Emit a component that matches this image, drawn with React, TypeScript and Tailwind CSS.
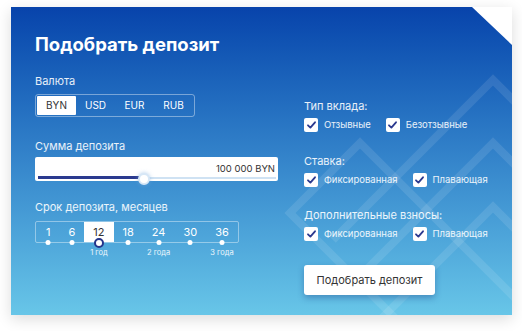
import type { ReactNode } from 'react';

const CURRENCIES = ['BYN', 'USD', 'EUR', 'RUB'];

const TERMS = [
  { value: '1' },
  { value: '6' },
  { value: '12', note: '1 год' },
  { value: '18' },
  { value: '24', note: '2 года' },
  { value: '30' },
  { value: '36', note: '3 года' },
];

function Check({ label }: { label: string }) {
  return (
    <label className="flex items-center gap-[6px]">
      <span className="w-[14px] h-[14px] rounded-[2px] bg-white flex items-center justify-center">
        <svg width="9" height="8" viewBox="0 0 9 8">
          <path d="M1 4.3 L3.4 6.6 L8 1.3" fill="none" stroke="#2c3a8f" strokeWidth="1.8" strokeLinecap="round" strokeLinejoin="round" />
        </svg>
      </span>
      <span className="text-[9.5px] leading-[14px] text-white/90">{label}</span>
    </label>
  );
}

function Group({ title, children, className }: { title: string; children: ReactNode; className?: string }) {
  return (
    <div className={className}>
      <div className="text-[11px] leading-[16px] text-white/90">{title}</div>
      <div className="mt-[4px] flex gap-[15px]">{children}</div>
    </div>
  );
}

function Pattern() {
  // decorative chevrons behind the form
  return (
    <svg className="absolute inset-0 pointer-events-none" width="501" height="308" viewBox="0 0 501 308">
      <g fill="none" stroke="white" strokeOpacity="0.1" strokeWidth="8" strokeLinejoin="miter">
        <polyline points="322,233 482,73 560,151" />
        <polyline points="389,316 279,206 349,136 569,356" />
        <polyline points="332,286 482,136 560,214" />
        <polyline points="352,330 482,200 560,278" />
      </g>
    </svg>
  );
}

function App() {
  return (
    <div className="min-h-screen bg-white pl-[11px] pt-[7px] font-['Inter',sans-serif]">
      <div className="w-[501px] h-[308px] bg-white shadow-[0_4px_14px_rgba(0,0,0,0.14)]">
        <div className="relative w-full h-full bg-gradient-to-b from-[#0843ab] via-[#3585cb] to-[#68c6e8] [clip-path:polygon(0_0,461px_0,100%_38px,100%_100%,0_100%)]">
          <Pattern />
          <div className="relative flex pt-[25px] pl-[24px]">
            {/* Left column */}
            <div className="w-[243px] flex flex-col">
              <h1 className="text-[18.5px] leading-[24px] font-bold text-white">Подобрать депозит</h1>

              <div className="mt-[17px] text-[11px] leading-[16px] text-white/90">Валюта</div>
              <div className="mt-[5px] flex w-fit p-px border border-white/40 rounded-[3px]">
                {CURRENCIES.map(c => (
                  <div
                    key={c}
                    className={c === 'BYN'
                      ? 'w-[39px] h-[19px] flex items-center justify-center text-[10px] bg-white text-[#333] rounded-[1px]'
                      : 'w-[39px] h-[19px] flex items-center justify-center text-[10px] text-white'}
                  >
                    {c}
                  </div>
                ))}
              </div>

              <div className="mt-[21px] text-[11px] leading-[16px] text-white/90">Сумма депозита</div>
              <div className="relative mt-[3px] h-[24px] bg-white rounded-[2px]">
                <div className="pt-[5px] pr-[3px] text-right text-[9.5px] leading-[14px] text-[#333]">100 000 BYN</div>
                <div className="absolute left-[3px] right-[2px] bottom-[2px] h-[2px] bg-[#cfe2f3]">
                  <div className="w-[106px] h-[3px] -mt-px bg-[#2a3a8f]" />
                </div>
                <div className="absolute left-[103px] bottom-[-4px] w-[12px] h-[12px] rounded-full bg-white border-2 border-[#d7e7f6] shadow-[0_0_4px_rgba(120,170,220,0.6)]" />
              </div>

              <div className="mt-[18px] text-[11px] leading-[16px] text-white/90">Срок депозита, месяцев</div>
              <div className="mt-[6px] flex w-fit h-[22px] pl-px border border-white/40 rounded-[2px]">
                {TERMS.map(t => (
                  <div
                    key={t.value}
                    className={t.value === '12'
                      ? 'relative h-full flex items-center px-[9px] text-[11px] bg-white text-[#333]'
                      : 'relative h-full flex items-center px-[9px] text-[11px] text-white'}
                  >
                    {t.value}
                    {t.value === '12' ? (
                      <span className="absolute left-1/2 -translate-x-1/2 bottom-[-6px] w-[10px] h-[10px] rounded-full bg-white border-[2.5px] border-[#24348a]" />
                    ) : (
                      <span className="absolute left-1/2 -translate-x-1/2 bottom-[-3px] w-[5px] h-[5px] rounded-full bg-white" />
                    )}
                    {t.note && (
                      <span className="absolute left-1/2 -translate-x-1/2 top-full mt-[6px] whitespace-nowrap text-[7.5px] leading-[10px] text-white/90">
                        {t.note}
                      </span>
                    )}
                  </div>
                ))}
              </div>
            </div>

            {/* Right column */}
            <div className="ml-[26px] mt-[66px] flex flex-col">
              <Group title="Тип вклада:">
                <Check label="Отзывные" />
                <Check label="Безотзывные" />
              </Group>
              <Group title="Ставка:" className="mt-[21px]">
                <Check label="Фиксированная" />
                <Check label="Плавающая" />
              </Group>
              <Group title="Дополнительные взносы:" className="mt-[20px]">
                <Check label="Фиксированная" />
                <Check label="Плавающая" />
              </Group>
              <button className="mt-[24px] w-[131px] h-[30px] bg-white rounded-[3px] shadow-[0_3px_6px_rgba(20,50,120,0.35)] text-[11px] text-[#333]">
                Подобрать депозит
              </button>
            </div>
          </div>
        </div>
      </div>
    </div>
  );
}

export default App;
